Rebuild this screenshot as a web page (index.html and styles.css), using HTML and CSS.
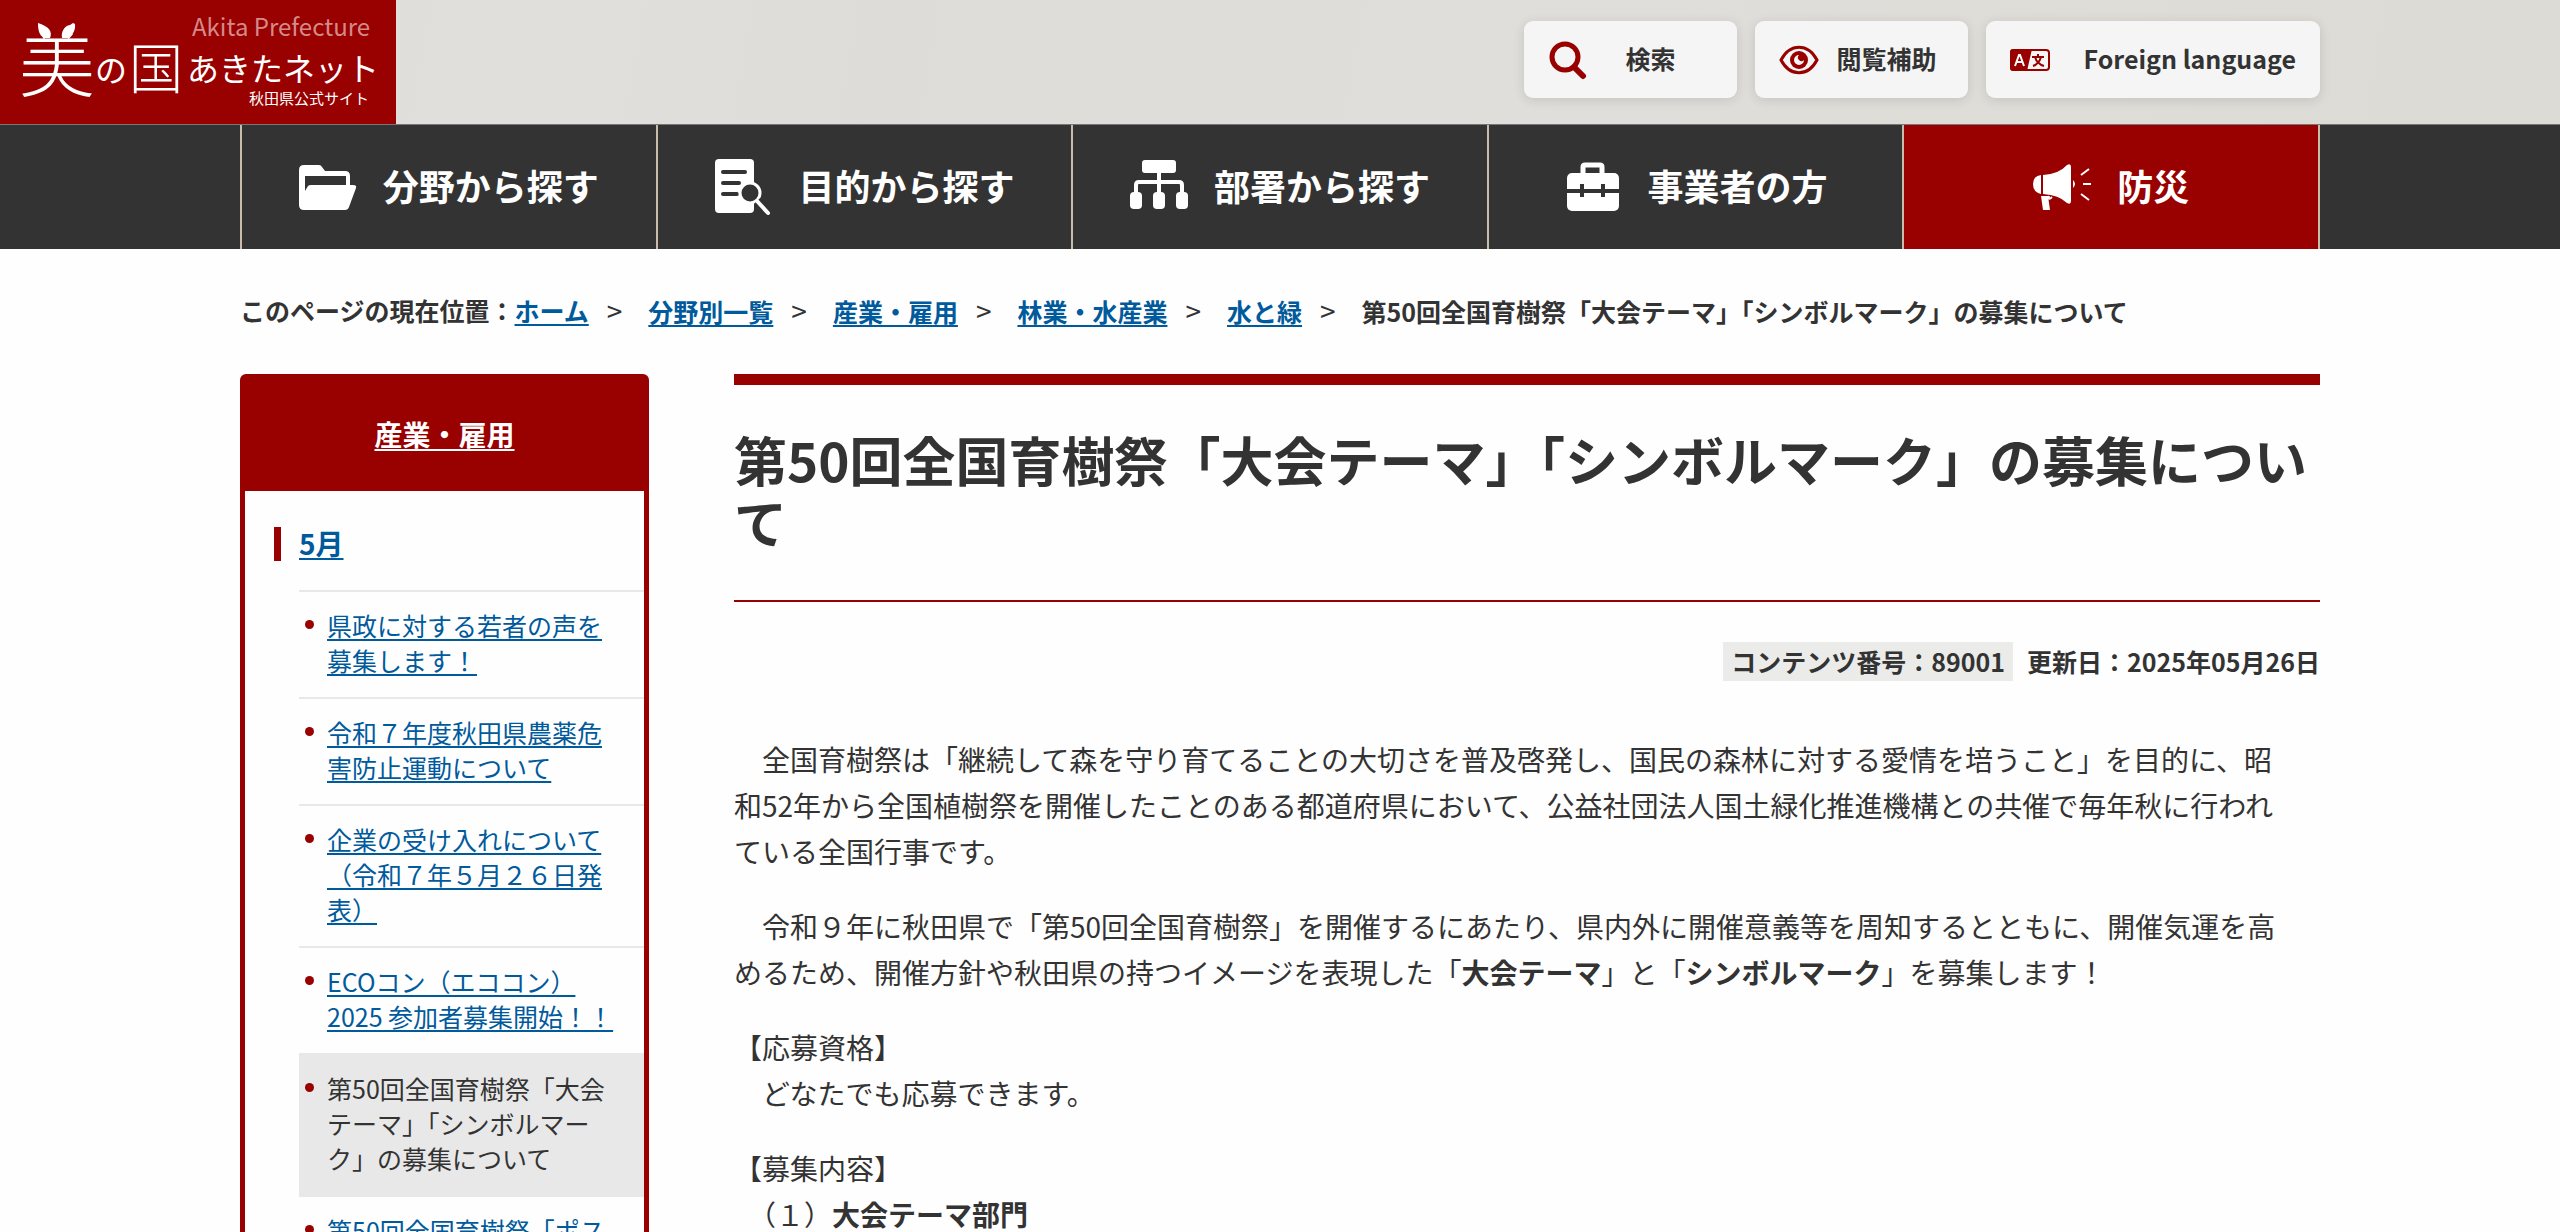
FILE: index.html
```html
<!DOCTYPE html>
<html lang="ja">
<head>
<meta charset="utf-8">
<meta name="viewport" content="width=device-width, initial-scale=1">
<title>第50回全国育樹祭「大会テーマ」「シンボルマーク」の募集について | 美の国あきたネット</title>
<link rel="stylesheet" href="styles.css">
</head>
<body>
<header class="site-header">
  <a class="logo" href="#" aria-label="美の国あきたネット 秋田県公式サイト">
    <svg class="logo-art" viewBox="0 0 396 124" role="img" aria-hidden="true">
      <text class="logo-en" x="192" y="36">Akita Prefecture</text>
      <text class="logo-bi" x="19" y="91">美</text>
      <rect class="logo-cover" x="32" y="20" width="52" height="14"/>
      <path class="logo-leaf" d="M38 23C48 26 53 31 50 38H44C39 35 38 30 38 23Z"/>
      <path class="logo-leaf" d="M75 24C76 31 71 38 66 38H62C61 32 64 26 70 25L73 23Z"/>
      <text class="logo-no" x="95" y="82">の</text>
      <text class="logo-kuni" x="129" y="89">国</text>
      <text class="logo-name" x="187" y="81">あきたネット</text>
      <text class="logo-sub" x="249" y="104">秋田県公式サイト</text>
    </svg>
  </a>
  <div class="tools">
    <button class="tool tool-search" type="button">
      <svg class="tool-icon" viewBox="0 0 40 40" aria-hidden="true"><circle cx="17" cy="17" r="13" fill="none" stroke="#900" stroke-width="5"/><path d="M26 27L35 36" stroke="#900" stroke-width="6" stroke-linecap="round"/></svg>
      <span class="tool-label">検索</span>
    </button>
    <button class="tool tool-view" type="button">
      <svg class="tool-icon" viewBox="0 0 40 40" aria-hidden="true"><path d="M2 20C11 3 29 3 38 20C29 37 11 37 2 20Z" fill="none" stroke="#900" stroke-width="3"/><circle cx="20" cy="20" r="9" fill="#900"/><path d="M20 15a5 5 0 1 0 5 5a3 3 0 0 1-5-5Z" fill="#f5f5f5"/></svg>
      <span class="tool-label">閲覧補助</span>
    </button>
    <button class="tool tool-lang" type="button">
      <svg class="tool-icon" viewBox="0 0 40 40" aria-hidden="true"><rect x="1" y="10" width="38" height="20" rx="3" fill="#f5f5f5" stroke="#900" stroke-width="2"/><path d="M3 9H22L17 31H3Q0 31 0 28V12Q0 9 3 9Z" fill="#900"/><path d="M5 26L9 15H10L14 26M7 22H13" fill="none" stroke="#fff" stroke-width="2"/><path d="M22 17H34M28 14V17M31 17Q29 24 23 26M25 17Q27 24 34 26" fill="none" stroke="#900" stroke-width="2"/></svg>
      <span class="tool-label">Foreign language</span>
    </button>
  </div>
</header>

<nav class="global-nav" aria-label="メインメニュー">
  <ul class="nav-list">
    <li class="nav-item"><a class="nav-link" href="#">
      <svg class="nav-icon" viewBox="0 0 58 58" aria-hidden="true"><path fill-rule="evenodd" d="M5 7H20Q22 7 23 9L26 13H46Q51 13 51 18V27H54Q58 27 57 30L50 49Q49 52 46 52H5Q0 52 0 47V12Q0 7 5 7ZM6 18V33L9 28Q10 27 12 27H47V18Z"/></svg>
      <span class="nav-label">分野から探す</span></a></li>
    <li class="nav-item"><a class="nav-link" href="#">
      <svg class="nav-icon" viewBox="0 0 58 58" aria-hidden="true"><rect x="1" y="1" width="39" height="54" rx="4"/><g stroke="#333" stroke-width="4" stroke-linecap="round"><path d="M9 14H31M9 25H25M9 36H23"/></g><circle cx="36" cy="35" r="10" fill="#333" stroke="#fff" stroke-width="3"/><path d="M43 43L54 55" stroke="#333" stroke-width="8"/><path d="M43 43L54 55" stroke="#fff" stroke-width="4" stroke-linecap="round"/></svg>
      <span class="nav-label">目的から探す</span></a></li>
    <li class="nav-item"><a class="nav-link" href="#">
      <svg class="nav-icon" viewBox="0 0 58 58" aria-hidden="true"><rect x="12" y="2" width="34" height="13" rx="3"/><rect x="0" y="34" width="12" height="17" rx="4"/><rect x="23" y="34" width="12" height="17" rx="4"/><rect x="46" y="34" width="12" height="17" rx="4"/><path d="M29 14V36M6 36V27Q6 24 9 24H49Q52 24 52 27V36" fill="none" stroke="#fff" stroke-width="4"/></svg>
      <span class="nav-label">部署から探す</span></a></li>
    <li class="nav-item"><a class="nav-link" href="#">
      <svg class="nav-icon" viewBox="0 0 58 58" aria-hidden="true"><path d="M19 16V9Q19 7 21 7H36Q38 7 38 9V16" fill="none" stroke="#fff" stroke-width="5"/><rect x="3" y="15" width="52" height="38" rx="5"/><path d="M3 33H55M18 26V39M39 26V39" stroke="#333" stroke-width="4" fill="none"/></svg>
      <span class="nav-label">事業者の方</span></a></li>
    <li class="nav-item nav-item-alert"><a class="nav-link" href="#">
      <svg class="nav-icon" viewBox="0 0 58 58" aria-hidden="true"><path d="M8 17H8V36H8Q0 34 0 26Q0 18 8 17ZM10 17Q26 16 34 7Q38 5 38 9V43Q38 47 34 45Q26 37 10 36ZM40 22Q44 26 40 30ZM8 38H15L17 52H10Z"/><path d="M16 38Q15 43 19 39M48 17L56 11M50 26H58M48 36L56 42" fill="none" stroke="#fff" stroke-width="2"/></svg>
      <span class="nav-label">防災</span></a></li>
  </ul>
</nav>

<div class="container">
  <nav class="breadcrumb" aria-label="現在位置">
    <span class="crumb-label">このページの現在位置：</span>
    <ol class="crumbs">
      <li><a href="#">ホーム</a></li>
      <li><a href="#">分野別一覧</a></li>
      <li><a href="#">産業・雇用</a></li>
      <li><a href="#">林業・水産業</a></li>
      <li><a href="#">水と緑</a></li>
      <li aria-current="page">第50回全国育樹祭「大会テーマ」「シンボルマーク」の募集について</li>
    </ol>
  </nav>

  <div class="columns">
    <aside class="side">
      <h2 class="side-title"><a href="#">産業・雇用</a></h2>
      <h3 class="side-month"><a href="#">5月</a></h3>
      <ul class="side-list">
        <li><a href="#">県政に対する若者の声を募集します！</a></li>
        <li><a href="#">令和７年度秋田県農薬危害防止運動について</a></li>
        <li><a href="#">企業の受け入れについて（令和７年５月２６日発表）</a></li>
        <li><a href="#">ECOコン（エココン）2025 参加者募集開始！！</a></li>
        <li class="current">第50回全国育樹祭「大会テーマ」「シンボルマーク」の募集について</li>
        <li><a href="#">第50回全国育樹祭「ポス</a></li>
      </ul>
    </aside>

    <main class="article">
      <h1 class="article-title">第50回全国育樹祭「大会テーマ」「シンボルマーク」の募集について</h1>
      <div class="meta">
        <span class="meta-id">コンテンツ番号：89001</span>
        <span>更新日：2025年05月26日</span>
      </div>
      <div class="article-body">
        <p>　全国育樹祭は「継続して森を守り育てることの大切さを普及啓発し、国民の森林に対する愛情を培うこと」を目的に、昭和52年から全国植樹祭を開催したことのある都道府県において、公益社団法人国土緑化推進機構との共催で毎年秋に行われている全国行事です。</p>
        <p>　令和９年に秋田県で「第50回全国育樹祭」を開催するにあたり、県内外に開催意義等を周知するとともに、開催気運を高めるため、開催方針や秋田県の持つイメージを表現した「<strong>大会テーマ</strong>」と「<strong>シンボルマーク</strong>」を募集します！</p>
        <p>【応募資格】<br>　どなたでも応募できます。</p>
        <p>【募集内容】<br>　（１）<strong>大会テーマ部門</strong></p>
      </div>
    </main>
  </div>
</div>
</body>
</html>
```

FILE: styles.css
```css
:root {
  --red: #900;
  --ink: #333;
  --link: #005a9c;
  --rule: #e8e8e8;
}

* { box-sizing: border-box; }

html { scrollbar-width: none; }

body {
  margin: 0;
  background: #fefefe;
  color: var(--ink);
  font-family: "Noto Sans CJK JP", sans-serif;
  font-size: 25px;
  line-height: 35px;
}

ul, ol { list-style: none; margin: 0; padding: 0; }
h1, h2, h3, p { margin: 0; }

a {
  color: var(--link);
  text-decoration-thickness: 2px;
  text-underline-offset: 3px;
}

/* Header */
.site-header {
  display: flex;
  justify-content: space-between;
  align-items: flex-start;
  padding-right: 9.375%;
  background: linear-gradient(100deg, #dfdedb 0%, #e0dfdc 24%, #dddcd8 34%, #dfdeda 60%, #dcdbd5 100%);
}

.logo {
  display: block;
  width: 396px;
  background: var(--red);
}
.logo-art { display: block; width: 100%; fill: #fff; }
.logo-en { font: 400 24px "Noto Sans CJK JP", sans-serif; fill: #d58a8a; }
.logo-bi { font: 300 76px "Noto Sans CJK JP", sans-serif; }
.logo-no { font: 400 32px "Noto Sans CJK JP", sans-serif; }
.logo-kuni { font: 300 54px "Noto Sans CJK JP", sans-serif; }
.logo-name { font: 400 32px "Noto Sans CJK JP", sans-serif; }
.logo-sub { font: 400 15px "Noto Sans CJK JP", sans-serif; }
.logo-cover { fill: var(--red); }
.logo-leaf { fill: #fff; }

.tools { display: flex; gap: 18px; padding-top: 21px; }
.tool {
  display: flex;
  align-items: center;
  height: 77px;
  width: 213px;
  padding: 0 24px;
  border: 0;
  border-radius: 9px;
  background: #f5f5f5;
  box-shadow: 0 2px 12px rgba(0, 0, 0, .12);
  color: var(--ink);
  font: 700 25px/35px "Noto Sans CJK JP", sans-serif;
}
.tool-lang { width: 334px; }
.tool-icon { width: 40px; height: 40px; flex: none; }
.tool-label {
  flex: 1;
  padding-bottom: 3px;
  text-align: center;
  white-space: nowrap;
}
.tool-lang .tool-label { text-align: right; }
.tool-view { padding-right: 14px; }

/* Global navigation */
.global-nav {
  padding: 0 9.375%;
  border-top: 1px solid #777;
  background: var(--ink);
}
.nav-list {
  display: grid;
  grid-template-columns: repeat(5, 1fr);
  border-left: 2px solid #c8bcab;
}
.nav-item { border-right: 2px solid #c8bcab; }
.nav-item-alert { background: var(--red); }
.nav-link {
  display: flex;
  align-items: center;
  justify-content: center;
  gap: 26px;
  height: 124px;
  color: #fff;
  font-size: 36px;
  font-weight: 700;
  text-decoration: none;
}
.nav-label { padding-bottom: 4px; }
.nav-icon { width: 58px; height: 58px; fill: #fff; }

/* Breadcrumb */
.container { padding: 0 9.375%; }
.breadcrumb {
  display: flex;
  padding: 44px 0 45px;
  font-weight: 700;
  white-space: nowrap;
}
.crumbs { display: flex; }
.crumbs li + li::before {
  content: ">";
  padding: 0 26px 0 18px;
  font-size: 28px;
  font-weight: 400;
}

/* Columns */
.columns {
  display: grid;
  grid-template-columns: 409px 1fr;
  gap: 85px;
}

.side {
  border: 5px solid var(--red);
  border-radius: 6px;
}
.side-title {
  padding: 38px 0 39px;
  background: var(--red);
  font-size: 28px;
  text-align: center;
}
.side-title a { color: #fff; }
.side-month {
  display: flex;
  align-items: center;
  gap: 18px;
  padding: 35px 0 29px 29px;
  font-size: 28px;
}
.side-month::before {
  content: "";
  width: 7px;
  height: 34px;
  background: var(--red);
}
.side-list { padding-left: 54px; }
.side-list li {
  display: flex;
  align-items: flex-start;
  gap: 13px;
  padding: 16px 20px 19px 6px;
  border-top: 2px solid var(--rule);
}
.side-list li::before {
  content: "";
  flex: none;
  width: 9px;
  height: 9px;
  margin-top: 12px;
  border-radius: 50%;
  background: var(--red);
}
.side-list .current { background: var(--rule); }

/* Article */
.article-title {
  padding: 43px 0 48px;
  border-top: 11px solid var(--red);
  border-bottom: 2px solid var(--red);
  font-size: 53px;
  line-height: 62px;
}
.meta {
  display: flex;
  justify-content: flex-end;
  gap: 14px;
  padding-top: 40px;
  font-weight: 700;
  line-height: 39px;
}
.meta-id { padding: 0 8px; background: #ebebea; }
.article-body {
  padding: 55px 22px 0 0;
  font-size: 28px;
  line-height: 46px;
}
.article-body p { margin-bottom: 29px; }
```
